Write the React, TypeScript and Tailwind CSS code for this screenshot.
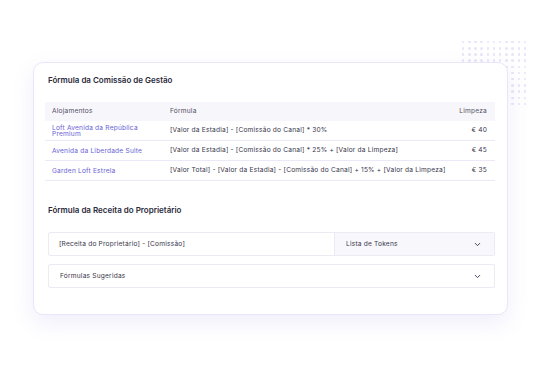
import { ChevronDown } from 'lucide-react'

const rows = [
  {
    name: 'Loft Avenida da República Premium',
    formula: '[Valor da Estadia] - [Comissão do Canal] * 30%',
    clean: '€ 40',
  },
  {
    name: 'Avenida da Liberdade Suite',
    formula: '[Valor da Estadia] - [Comissão do Canal] * 25% + [Valor da Limpeza]',
    clean: '€ 45',
  },
  {
    name: 'Garden Loft Estrela',
    formula: '[Valor Total] - [Valor da Estadia] - [Comissão do Canal] + 15% + [Valor da Limpeza]',
    clean: '€ 35',
  },
]

function Dots() {
  const cells = Array.from({ length: 121 })
  return (
    <div className="absolute left-[460px] top-[39px] grid grid-cols-[repeat(11,6.2px)] grid-rows-[repeat(11,6.2px)]">
      {cells.map((_, i) => (
        <div key={i} className="flex items-center justify-center">
          <div className="h-[2.5px] w-[2.5px] rounded-full bg-[#e7e5f8]" />
        </div>
      ))}
    </div>
  )
}

export default function App() {
  return (
    <div
      className="relative h-[377px] w-[540px] overflow-hidden bg-white"
      style={{ fontFamily: 'Inter, "Noto Sans", sans-serif' }}
    >
      <Dots />
      <div className="relative pl-[33px] pt-[62px]">
        <section className="flex h-[253px] w-[475px] flex-col rounded-[10px] border border-[#e9e6fa] bg-white px-[11px] pt-[12px] shadow-[0_8px_22px_rgba(99,91,220,0.10)]">
          <h2 className="pl-[3px] text-[8px] font-semibold leading-[11px] text-[#2b2a3a]">
            Fórmula da Comissão de Gestão
          </h2>

          <div className="mt-[16px] w-[450px] tracking-[0.2px]">
            <div className="flex h-[19px] items-center bg-[#f7f7fb] text-[6.6px] text-[#4f4e63]">
              <div className="w-[125px] pl-[7px]">Alojamentos</div>
              <div className="flex-1">Fórmula</div>
              <div className="pr-[8px]">Limpeza</div>
            </div>
            {rows.map((r) => (
              <div
                key={r.name}
                className="flex h-[20px] items-center border-b border-[#ebe9f8] text-[6.6px]"
              >
                <div className="w-[125px] pl-[7px]">
                  <div className="w-[100px] leading-[6px] text-[#6760d6]">{r.name}</div>
                </div>
                <div className="flex-1 text-[#36354a]">{r.formula}</div>
                <div className="pr-[8px] text-[#36354a]">{r.clean}</div>
              </div>
            ))}
          </div>

          <h2 className="mt-[24px] pl-[3px] text-[8px] font-semibold leading-[11px] text-[#2b2a3a]">
            Fórmula da Receita do Proprietário
          </h2>

          <div className="ml-[3px] mt-[16px] flex h-[24px] w-[447px] rounded-[2px] border border-[#ecebf4] text-[6.6px] tracking-[0.2px] text-[#36354a]">
            <div className="flex w-[285px] items-center pl-[10px] pt-[1px]">
              [Receita do Proprietário] - [Comissão]
            </div>
            <div className="flex flex-1 items-center justify-between border-l border-[#ecebf4] bg-[#f8f8fc] pl-[11px] pr-[12px] pt-[1px]">
              <span>Lista de Tokens</span>
              <ChevronDown size={9} strokeWidth={2.5} className="text-[#3a3950]" />
            </div>
          </div>

          <div className="ml-[3px] mt-[8px] flex h-[24px] w-[447px] items-center justify-between rounded-[2px] border border-[#ecebf4] pl-[11px] pr-[12px] pt-[1px] text-[6.6px] tracking-[0.2px] text-[#36354a]">
            <span>Fórmulas Sugeridas</span>
            <ChevronDown size={9} strokeWidth={2.5} className="text-[#3a3950]" />
          </div>
        </section>
      </div>
    </div>
  )
}
